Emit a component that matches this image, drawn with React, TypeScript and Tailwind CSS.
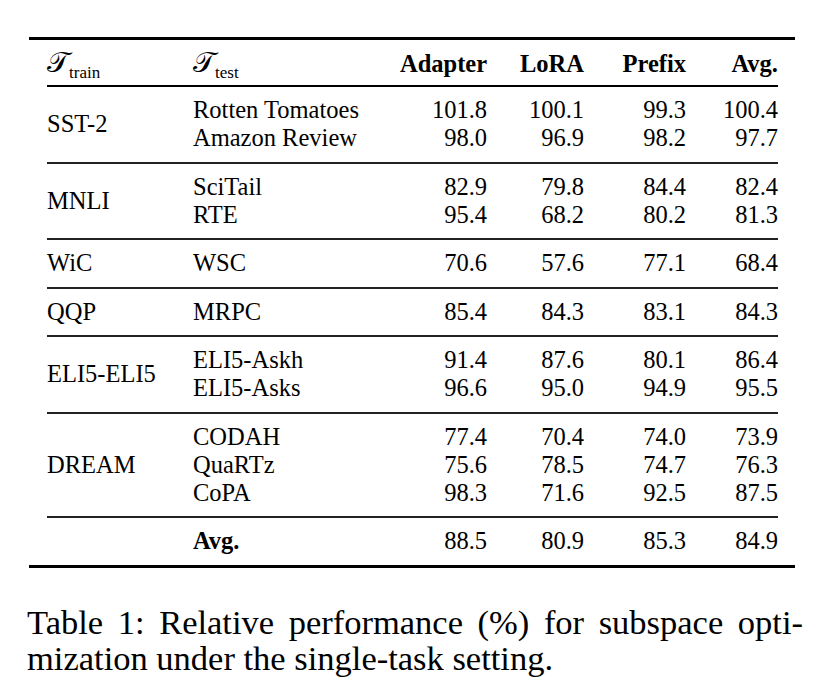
import type { ReactNode } from "react";

type Row = [string, string, string, string, string];

interface Group {
  train: string;
  rows: Row[];
}

const groups: Group[] = [
  {
    train: "SST-2",
    rows: [
      ["Rotten Tomatoes", "101.8", "100.1", "99.3", "100.4"],
      ["Amazon Review", "98.0", "96.9", "98.2", "97.7"],
    ],
  },
  {
    train: "MNLI",
    rows: [
      ["SciTail", "82.9", "79.8", "84.4", "82.4"],
      ["RTE", "95.4", "68.2", "80.2", "81.3"],
    ],
  },
  { train: "WiC", rows: [["WSC", "70.6", "57.6", "77.1", "68.4"]] },
  { train: "QQP", rows: [["MRPC", "85.4", "84.3", "83.1", "84.3"]] },
  {
    train: "ELI5-ELI5",
    rows: [
      ["ELI5-Askh", "91.4", "87.6", "80.1", "86.4"],
      ["ELI5-Asks", "96.6", "95.0", "94.9", "95.5"],
    ],
  },
  {
    train: "DREAM",
    rows: [
      ["CODAH", "77.4", "70.4", "74.0", "73.9"],
      ["QuaRTz", "75.6", "78.5", "74.7", "76.3"],
      ["CoPA", "98.3", "71.6", "92.5", "87.5"],
    ],
  },
];

// widths of the four number columns (right aligned)
const numCols = ["w-[87px]", "w-[97px]", "w-[102px]", "w-[92px]"];

const Tau = ({ sub }: { sub: string }) => (
  <span className="inline-flex items-baseline">
    <span className="font-['DejaVu_Serif','Liberation_Serif',serif] text-[29px] leading-[28px]">
      𝒯
    </span>
    <span className="relative top-[6px] text-[17px] leading-[28px]">{sub}</span>
  </span>
);

const Line = ({ children, right }: { children: ReactNode; right?: boolean }) => (
  <div className={`h-[28px] leading-[28px] whitespace-nowrap ${right ? "text-right" : ""}`}>
    {children}
  </div>
);

const GroupRow = ({ group }: { group: Group }) => (
  <div className="flex border-b-2 border-[#222] py-[9.25px]">
    <div className="flex w-[146px] items-center">{group.train}</div>
    <div className="flex w-[207px] flex-col">
      {group.rows.map((r) => (
        <Line key={r[0]}>{r[0]}</Line>
      ))}
    </div>
    {numCols.map((w, i) => (
      <div key={w} className={`flex flex-col ${w}`}>
        {group.rows.map((r) => (
          <Line key={r[0]} right>
            {r[i + 1]}
          </Line>
        ))}
      </div>
    ))}
  </div>
);

export default function App() {
  return (
    <div className="min-h-[694px] bg-white pt-[37px] font-['Liberation_Serif','Times_New_Roman',serif] text-black">
      <div className="ml-[29px] w-[766px] border-y-[3px] border-black pl-[18px] pr-[17px] text-[24.5px] leading-[28px]">
        <div className="flex h-[47px] items-center border-b-2 border-black pt-[3px]">
          <div className="w-[146px]">
            <Tau sub="train" />
          </div>
          <div className="w-[207px]">
            <Tau sub="test" />
          </div>
          <div className="w-[87px] text-right font-bold">Adapter</div>
          <div className="w-[97px] text-right font-bold">LoRA</div>
          <div className="w-[102px] text-right font-bold">Prefix</div>
          <div className="w-[92px] text-right font-bold">Avg.</div>
        </div>

        {groups.map((g) => (
          <GroupRow key={g.train} group={g} />
        ))}

        <div className="flex py-[9.25px]">
          <div className="w-[146px]" />
          <div className="w-[207px] font-bold">
            <Line>Avg.</Line>
          </div>
          <div className="w-[87px]">
            <Line right>88.5</Line>
          </div>
          <div className="w-[97px]">
            <Line right>80.9</Line>
          </div>
          <div className="w-[102px]">
            <Line right>85.3</Line>
          </div>
          <div className="w-[92px]">
            <Line right>84.9</Line>
          </div>
        </div>
      </div>

      <div className="ml-[27px] mt-[36.5px] w-[776px] text-[34.5px] leading-[36px]">
        <div className="text-justify [text-align-last:justify]">
          Table 1: Relative performance (%) for subspace opti-
        </div>
        <div>mization under the single-task setting.</div>
      </div>
    </div>
  );
}
